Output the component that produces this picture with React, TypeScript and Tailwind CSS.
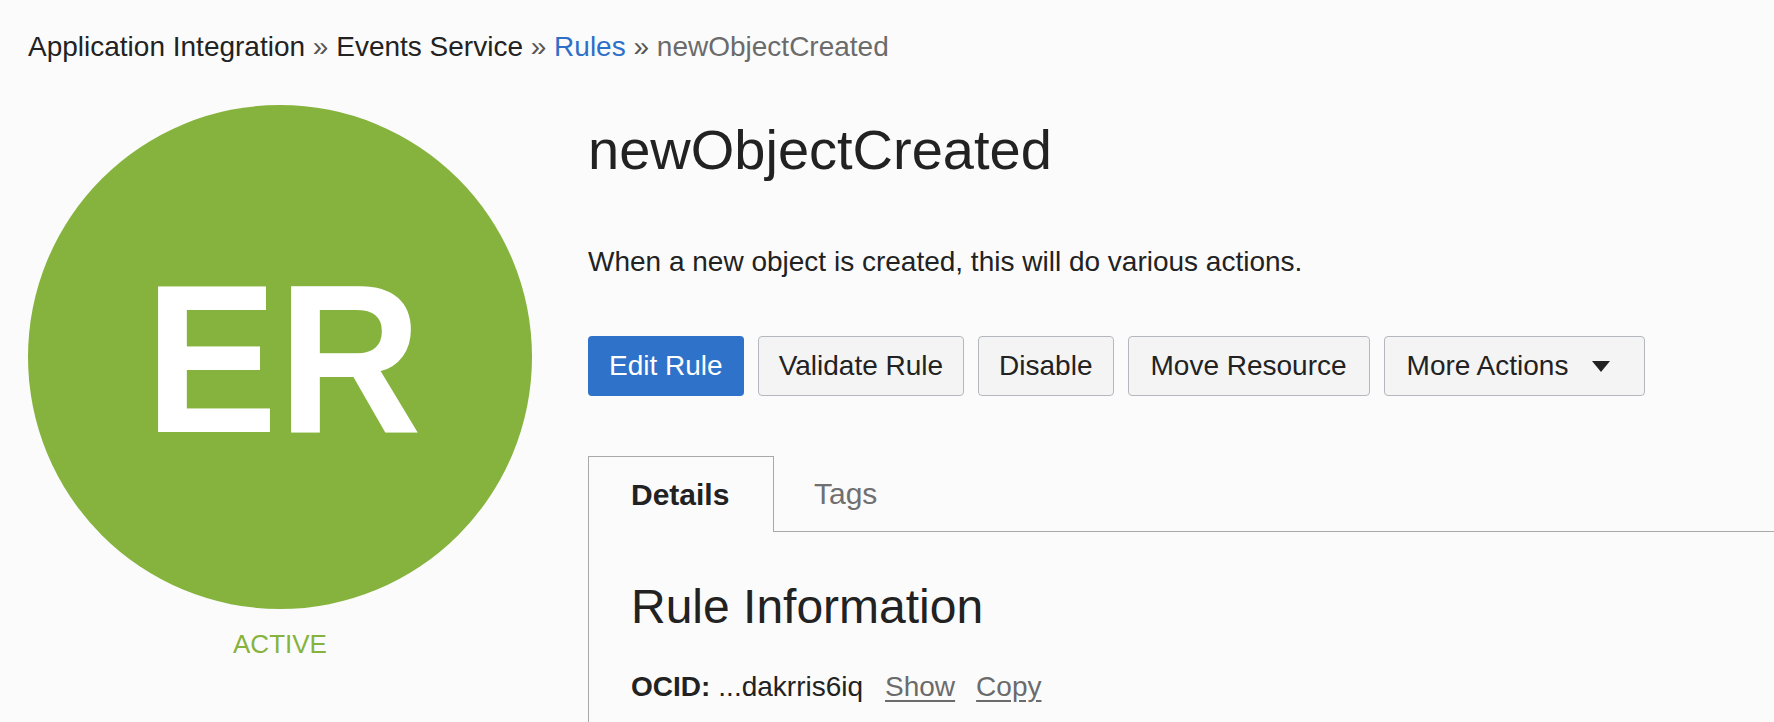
const buttons = [
  { label: "Validate Rule", pad: "px-[20px]" },
  { label: "Disable", pad: "px-[20px]" },
  { label: "Move Resource", pad: "px-[22px]" },
];

export default function App() {
  return (
    <div className="min-h-screen bg-[#fbfbfb] px-[28px] font-['Liberation_Sans',Arial,sans-serif] text-[#222]">
      {/* Breadcrumb */}
      <nav className="pt-[31px] text-[28px] leading-[32px]">
        <span>Application Integration</span>
        <span className="text-[#555]"> » </span>
        <span>Events Service</span>
        <span className="text-[#555]"> » </span>
        <a href="#" className="text-[#2f6fc7]">Rules</a>
        <span className="text-[#555]"> » </span>
        <span className="text-[#6b6b6b]">newObjectCreated</span>
      </nav>

      <div className="mt-[42px] flex gap-[56px]">
        {/* Avatar */}
        <div className="flex w-[504px] shrink-0 flex-col items-center">
          <div className="flex h-[504px] w-[504px] items-center justify-center rounded-full bg-[#86b33e]">
            <span className="ml-[6px] pt-[3px] scale-x-[0.94] text-[212px] font-bold leading-none text-white">ER</span>
          </div>
          <div className="mt-[20px] text-[26px] leading-[30px] text-[#86b33e]">ACTIVE</div>
        </div>

        {/* Main */}
        <div className="flex-1">
          <h1 className="mt-[13px] text-[56px] leading-[64px] text-[#222]">newObjectCreated</h1>
          <p className="mt-[64px] text-[28px] leading-[32px]">
            When a new object is created, this will do various actions.
          </p>

          <div className="mt-[58px] flex gap-[14px]">
            <button className="h-[60px] rounded-[4px] bg-[#2f72c9] px-[21px] text-[28px] text-white">
              Edit Rule
            </button>
            {buttons.map((b) => (
              <button
                key={b.label}
                className={`h-[60px] rounded-[4px] border border-[#b4b8be] bg-[#f4f4f4] ${b.pad} text-[28px] text-[#222]`}
              >
                {b.label}
              </button>
            ))}
            <button className="flex h-[60px] items-center gap-[24px] rounded-[4px] border border-[#b4b8be] bg-[#f4f4f4] pl-[22px] pr-[34px] text-[28px] text-[#222]">
              More Actions
              <svg width="18" height="11" viewBox="0 0 18 11">
                <path d="M0 0h18L9 11z" fill="#222" />
              </svg>
            </button>
          </div>

          {/* Tabs panel */}
          <div className="mt-[60px] -mr-[28px] border-l border-[#a9a9a9]">
            <div className="flex">
              <div className="flex h-[76px] w-[185px] items-center border-r border-t border-[#a9a9a9] pl-[42px] text-[30px] font-bold">
                Details
              </div>
              <div className="flex h-[76px] flex-1 items-center border-b border-[#a9a9a9] pl-[40px] text-[30px] text-[#707070]">
                Tags
              </div>
            </div>
            <div className="px-[42px] pb-[40px]">
              <h2 className="mt-[47px] text-[48px] leading-[56px]">Rule Information</h2>
              <div className="mt-[36px] flex items-baseline text-[28px] leading-[32px]">
                <span className="font-bold">OCID:</span>
                <span className="ml-[8px]">...dakrris6iq</span>
                <a href="#" className="ml-[22px] text-[#6b6b6b] underline underline-offset-4">Show</a>
                <a href="#" className="ml-[21px] text-[#6b6b6b] underline underline-offset-4">Copy</a>
              </div>
            </div>
          </div>
        </div>
      </div>
    </div>
  );
}
